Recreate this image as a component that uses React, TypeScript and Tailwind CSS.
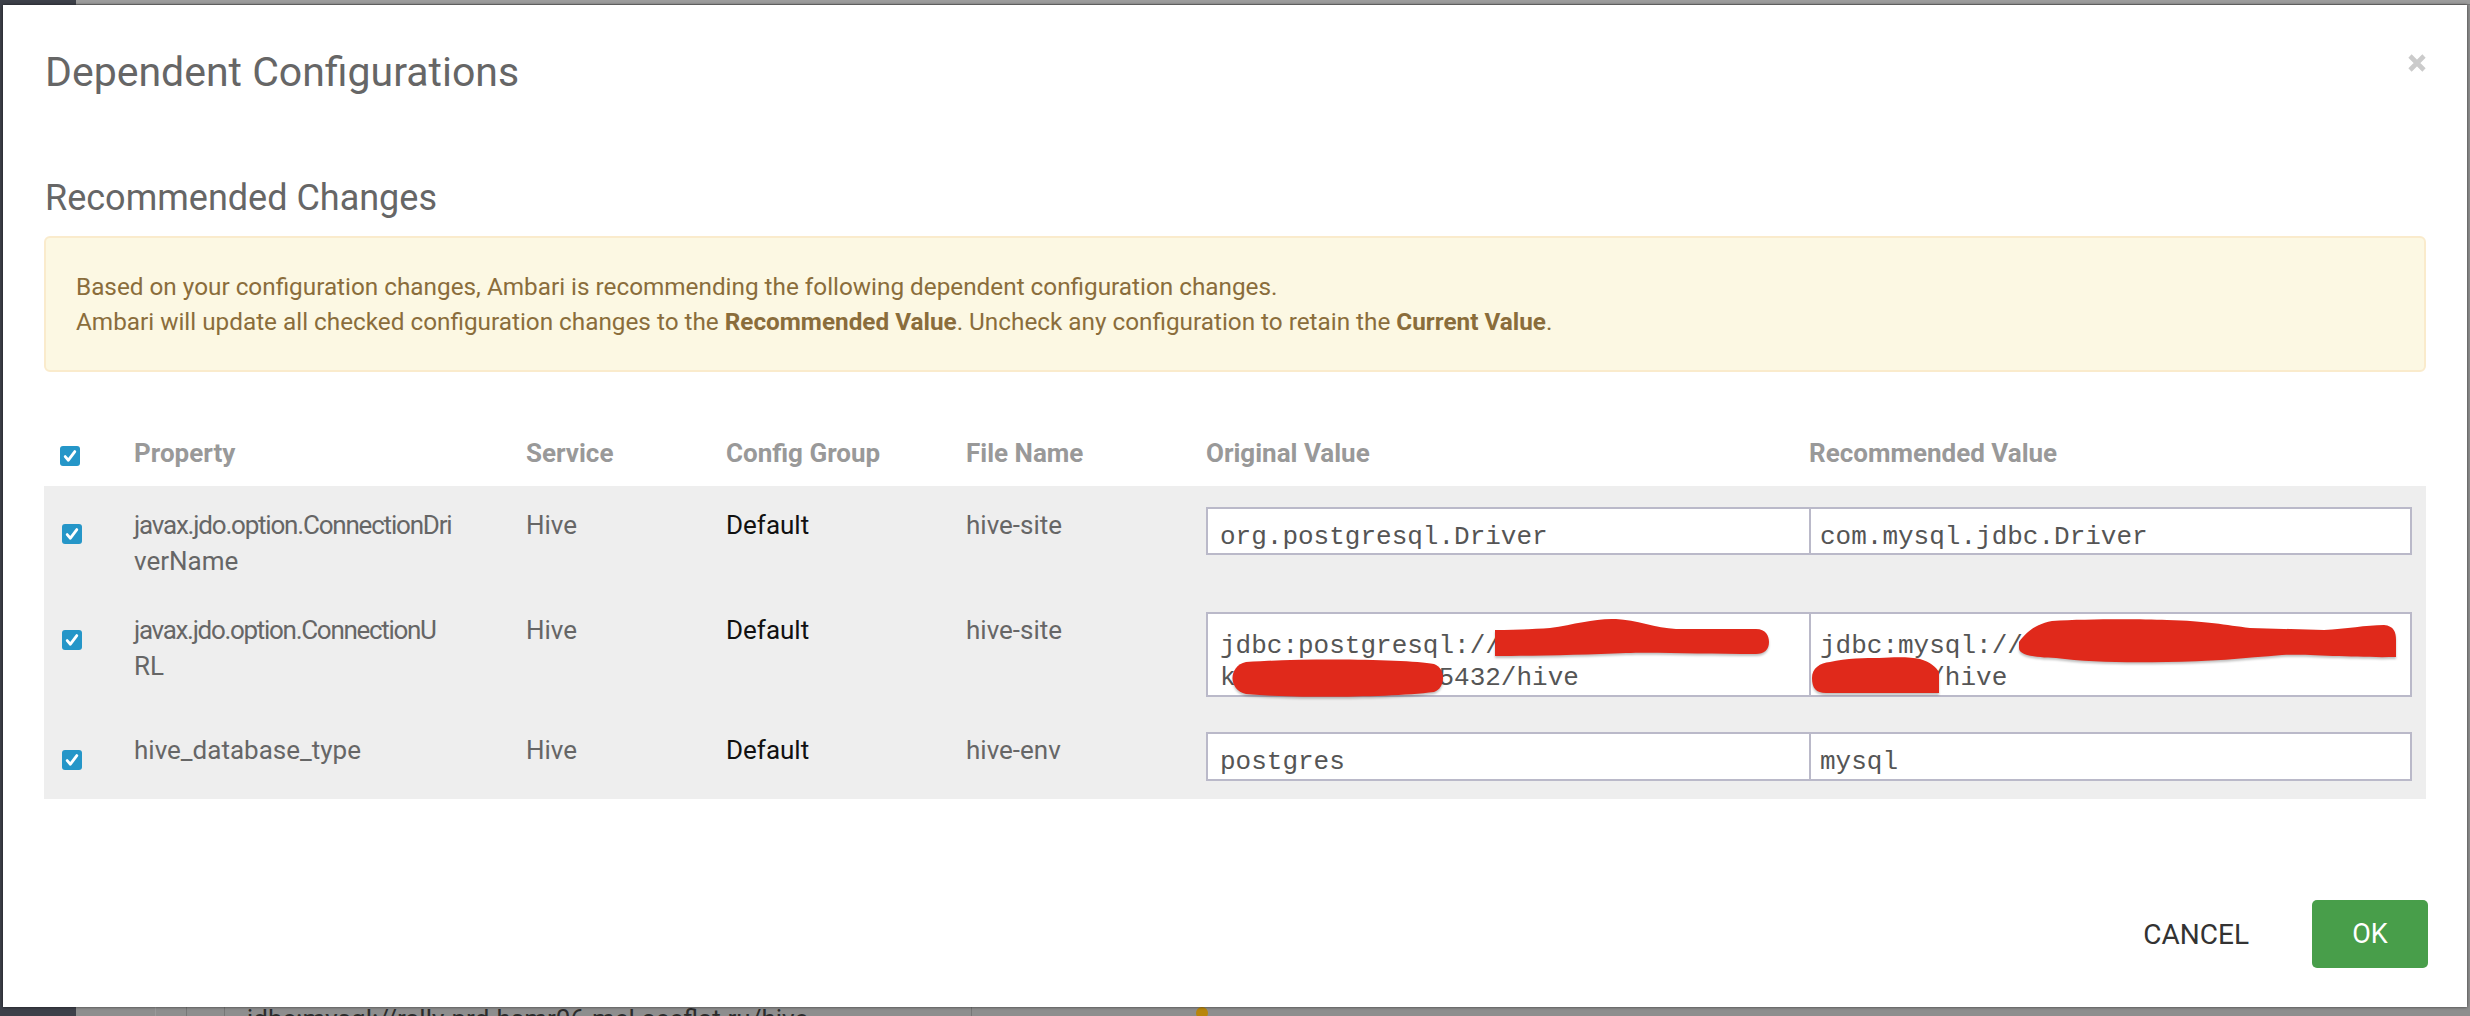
import type { ReactNode } from 'react'

function Check() {
  return (
    <span className="flex h-[20px] w-[20px] items-center justify-center rounded-[3px] bg-[#2596c8]">
      <svg width="14" height="14" viewBox="0 0 14 14">
        <path d="M2.2 7.6 L5.4 11.2 L11.8 2.6" fill="none" stroke="white" strokeWidth="2.8" strokeLinecap="round" strokeLinejoin="round" />
      </svg>
    </span>
  )
}

const mono = "font-['Liberation_Mono',monospace] text-[26px] leading-[32px] text-[#555]"

function ValuePair({ h, pt, left, right }: { h: string; pt: string; left: ReactNode; right: ReactNode }) {
  return (
    <div className="flex">
      <div className={`${h} ${pt} ${mono} w-[605px] border-2 border-[#bab9c9] bg-white pl-[12px] whitespace-pre`}>{left}</div>
      <div className={`${h} ${pt} ${mono} w-[601px] border-2 border-l-0 border-[#bab9c9] bg-white pl-[9px] whitespace-pre`}>{right}</div>
    </div>
  )
}

// red marker scribbles that hide the host names
function Scribbles() {
  return (
    <svg className="pointer-events-none absolute left-0 top-0 drop-shadow-[0_2px_1px_rgba(0,0,0,0.25)]" width="1206" height="85" viewBox="0 0 1206 85">
      <g fill="#e0291b">
        <path d="M289,18 C310,18 330,17 344,16 C370,12 390,6 410,7 C430,8 450,16 470,17 L550,17 C560,17 563,24 563,30 C563,38 558,42 550,42 C500,42 450,40 420,41 C380,43 320,44 289,44 Z" />
        <path d="M40,50 C100,46 200,47 228,52 C240,56 240,76 228,80 C180,86 80,86 40,82 C22,78 22,54 40,50 Z" />
        <path d="M813,30 C820,20 830,12 846,9 C880,7 930,7 961,8 C1000,9 1020,13 1044,16 L1118,18 C1140,17 1160,13 1178,13 C1188,14 1190,20 1190,28 L1190,45 C1150,46 1100,42 1076,43 C1040,46 1000,50 961,50 C920,51 880,50 850,46 C830,45 813,44 813,36 Z" />
        <path d="M606,66 C606,56 614,51 624,50 C640,46 660,46 673,46 C690,45 705,45 714,47 C724,50 730,55 733,60 L733,81 L620,81 C610,81 606,76 606,66 Z" />
      </g>
    </svg>
  )
}

const cols = 'grid grid-cols-[90px_392px_200px_240px_240px_1fr]'

export default function App() {
  return (
    <div className="relative h-[1016px] w-[2470px] overflow-hidden bg-[#8e8e8e] font-['Roboto',sans-serif]">
      {/* dimmed page behind the dialog */}
      <div className="flex h-full">
        <div className="w-[76px] bg-[#3d4049]" />
        <div className="flex flex-1 flex-col">
          <div className="h-[5px] border-b border-[#7a7a7a] bg-[#9c9c9c]" />
          <div className="flex-1" />
          <div className="flex h-[12px] items-start">
            <div className="h-full w-[80px] border-r border-[#9a9a9a]" />
            <div className="h-full w-[31px] border-r border-[#777]" />
            <div className="h-full w-[38px] border-r border-[#777]" />
            <div className="w-[746px] pl-[22px] text-[26px] leading-[30px] text-[#2c2c2c]">jdbc:mysql://rally-prd-hsmr06.mel.aceflat.ru/hive</div>
            <div className="h-full border-r border-[#777]" />
            <div className="ml-[224px] mt-[3px] h-[12px] w-[12px] rounded-full bg-[#b8860b]" />
          </div>
        </div>
      </div>

      <div className="absolute left-[3px] top-[5px] flex h-[1002px] w-[2464px] flex-col bg-white shadow-[0_0_3px_rgba(0,0,0,0.6)]">
        <div className="flex items-start justify-between pl-[42px] pr-[40px] pt-[43px]">
          <h1 className="text-[41px] leading-[48px] text-[#666]">Dependent Configurations</h1>
          <button className="mt-[5px]">
            <svg width="20" height="20" viewBox="0 0 20 20">
              <path d="M3 3 L17 17 M17 3 L3 17" stroke="#cbcbcb" strokeWidth="4.6" />
            </svg>
          </button>
        </div>

        <div className="flex-1 px-[41px]">
          <h2 className="mt-[81px] pl-[1px] text-[36px] leading-[42px] text-[#666]">Recommended Changes</h2>

          <div className="mt-[17px] rounded-[6px] border-2 border-[#faebcc] bg-[#fcf8e3] px-[30px] py-[31px] text-[24.3px] leading-[35px] text-[#8a6d3b]">
            <p>Based on your configuration changes, Ambari is recommending the following dependent configuration changes.</p>
            <p>
              Ambari will update all checked configuration changes to the <b>Recommended Value</b>. Uncheck any configuration to retain the <b>Current Value</b>.
            </p>
          </div>

          <div className="mt-[48px] grid h-[66px] grid-cols-[90px_392px_200px_240px_240px_603px_1fr] pt-[15px] text-[26px] font-bold leading-[36px] text-[#999]">
            <div className="pl-[16px] pt-[11px]"><Check /></div>
            <div>Property</div>
            <div>Service</div>
            <div>Config Group</div>
            <div>File Name</div>
            <div>Original Value</div>
            <div>Recommended Value</div>
          </div>

          <div className="bg-[#eeeeee] text-[26px] leading-[36px] text-[#666]">
            <div className={`${cols} h-[108px] pt-[21px]`}>
              <div className="pl-[18px] pt-[17px]"><Check /></div>
              <div><span className="block tracking-[-1.2px]">javax.jdo.option.ConnectionDri</span><span className="block">verName</span></div>
              <div>Hive</div>
              <div className="text-[#111]">Default</div>
              <div>hive-site</div>
              <div className="pr-[16px]">
                <ValuePair h="h-[48px]" pt="pt-[12px]" left="org.postgresql.Driver" right="com.mysql.jdbc.Driver" />
              </div>
            </div>

            <div className={`${cols} h-[120px] pt-[18px]`}>
              <div className="pl-[18px] pt-[18px]"><Check /></div>
              <div><span className="block tracking-[-1.3px]">javax.jdo.option.ConnectionU</span><span className="block">RL</span></div>
              <div>Hive</div>
              <div className="text-[#111]">Default</div>
              <div>hive-site</div>
              <div className="pr-[16px]">
                <div className="relative">
                  <ValuePair
                    h="h-[85px]"
                    pt="pt-[16px]"
                    left={'jdbc:postgresql://\nk             5432/hive'}
                    right={'jdbc:mysql://\n       /hive'}
                  />
                  <Scribbles />
                </div>
              </div>
            </div>

            <div className={`${cols} h-[85px] pt-[18px]`}>
              <div className="pl-[18px] pt-[18px]"><Check /></div>
              <div>hive_database_type</div>
              <div>Hive</div>
              <div className="text-[#111]">Default</div>
              <div>hive-env</div>
              <div className="pr-[16px]">
                <ValuePair h="h-[49px]" pt="pt-[12px]" left="postgres" right="mysql" />
              </div>
            </div>
          </div>
        </div>

        <div className="flex items-center justify-end pb-[39px] pr-[39px]">
          <button className="mr-[63px] pt-[2px] text-[28px] leading-[30px] text-[#333]">CANCEL</button>
          <button className="flex h-[68px] w-[116px] items-center justify-center rounded-[5px] bg-[#489e4a] text-[27px] text-white">OK</button>
        </div>
      </div>
    </div>
  )
}
